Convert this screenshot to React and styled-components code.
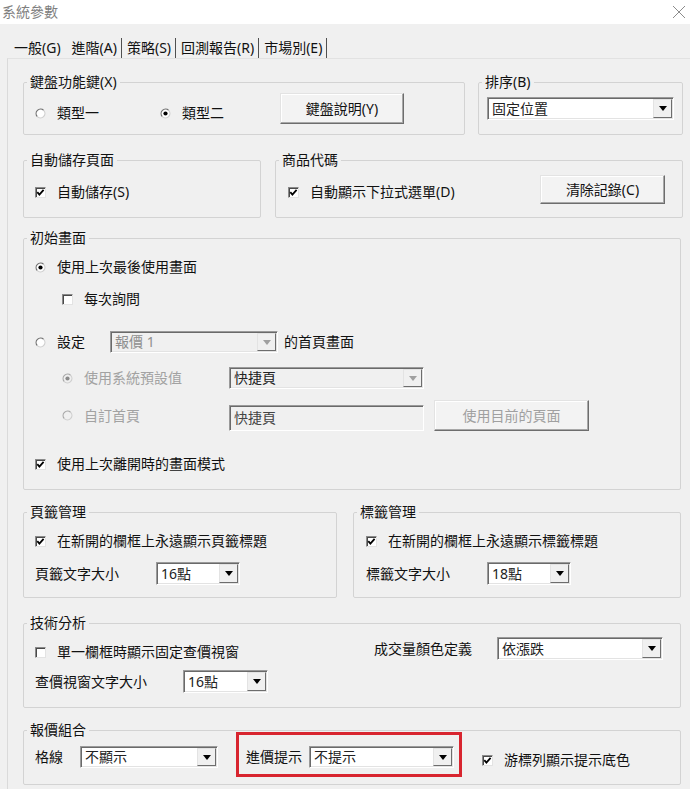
import React from 'react'
import styled, { createGlobalStyle } from 'styled-components'

const GlobalStyle = createGlobalStyle`
    html, body {
        margin: 0;
        padding: 0;
        background: #f0f0f0;
    }
    body {
        font-family: "Noto Sans", "Noto Sans CJK TC", sans-serif;
        font-size: 14px;
        line-height: 20px;
        color: #111;
    }
`

const tabs = ['一般(G)', '進階(A)', '策略(S)', '回測報告(R)', '市場別(E)']

const Radio = ({ checked, disabled }) => (
    <RadioSvg viewBox="0 0 11 11">
        <circle cx="5.5" cy="5.5" r="4.5" fill={disabled ? '#f0f0f0' : '#fff'} />
        <path d="M2.32 8.68A4.5 4.5 0 0 1 8.68 2.32" stroke={disabled ? '#a8a8a8' : '#707070'} strokeWidth="1.2" fill="none" />
        <path d="M8.68 2.32A4.5 4.5 0 0 1 2.32 8.68" stroke="#cfcfcf" strokeWidth="1.2" fill="none" />
        {checked && <circle cx="5.5" cy="5.5" r="2.1" fill={disabled ? '#8a8a8a' : '#000'} />}
    </RadioSvg>
)

const Option = ({ radio, checked, disabled, children, ...rest }) => (
    <OptionLabel $disabled={disabled} {...rest}>
        {radio ? (
            <Radio checked={checked} disabled={disabled} />
        ) : (
            <CheckBox>
                {checked && (
                    <svg width="9" height="9" viewBox="0 0 9 9">
                        <polyline points="1.3,4.2 3.4,6.6 7.6,1.9" fill="none" stroke="#000" strokeWidth="1.8" />
                    </svg>
                )}
            </CheckBox>
        )}
        <span>{children}</span>
    </OptionLabel>
)

const Select = ({ value, w, h = 23, disabled, muted }) => (
    <SelectFrame $w={w} $h={h} $disabled={disabled}>
        <SelectValue $muted={muted}>{value}</SelectValue>
        <Arrow $disabled={disabled} />
    </SelectFrame>
)

const App = () => {
    return (
        <Window>
            <GlobalStyle />
            <TitleBar>
                <Title>系統參數</Title>
                <svg width="14" height="14" viewBox="0 0 14 14">
                    <path d="M1 1L13 13M13 1L1 13" stroke="#8c8c8c" strokeWidth="1" />
                </svg>
            </TitleBar>
            <TabBar>
                {tabs.map((t, i) => (
                    <Tab key={t} $first={i === 0}>{t}</Tab>
                ))}
            </TabBar>
            <Panel>
                <Row $mt={13} $gap={13}>
                    <Group $w={442} $h={63}>
                        <Legend>鍵盤功能鍵(X)</Legend>
                        <Body $p="1px 0 0 11px">
                            <Option radio $mt={10}>類型一</Option>
                            <Option radio checked $mt={10} $ml={61}>類型二</Option>
                            <Button $w={124} $h={31} $ml={56}>鍵盤說明(Y)</Button>
                        </Body>
                    </Group>
                    <Group $w={205} $h={63}>
                        <Legend>排序(B)</Legend>
                        <Body $p="5px 0 0 8px">
                            <Select value="固定位置" w={187} />
                        </Body>
                    </Group>
                </Row>

                <Row $mt={15} $gap={14}>
                    <Group $w={238} $h={68}>
                        <Legend>自動儲存頁面</Legend>
                        <Body $p="0 0 0 11px">
                            <Option checked $mt={12}>自動儲存(S)</Option>
                        </Body>
                    </Group>
                    <Group $w={408} $h={68}>
                        <Legend>商品代碼</Legend>
                        <Body $p="0 17px 0 12px">
                            <Option checked $mt={12}>自動顯示下拉式選單(D)</Option>
                            <Button $w={125} $h={29} $mt={5} $push>清除記錄(C)</Button>
                        </Body>
                    </Group>
                </Row>

                <Row $mt={10}>
                    <Group $w={658} $h={262}>
                        <Legend>初始畫面</Legend>
                        <Body $p="0 0 0 11px" $col>
                            <Option radio checked $mt={9}>使用上次最後使用畫面</Option>
                            <Option $mt={12} $ml={27}>每次詢問</Option>
                            <Line $mt={22}>
                                <Cell $w={75}>
                                    <Option radio>設定</Option>
                                </Cell>
                                <Select value="報價 1" w={168} h={22} disabled muted />
                                <Text $ml={6}>的首頁畫面</Text>
                            </Line>
                            <Line $mt={14} $ml={27}>
                                <Cell $w={167}>
                                    <Option radio checked disabled>使用系統預設值</Option>
                                </Cell>
                                <Select value="快捷頁" w={195} h={22} disabled />
                            </Line>
                            <Line $mt={11} $ml={27}>
                                <Cell $w={167}>
                                    <Option radio disabled>自訂首頁</Option>
                                </Cell>
                                <Field>快捷頁</Field>
                                <Button $w={155} $h={31} $ml={10} disabled>使用目前的頁面</Button>
                            </Line>
                            <Option checked $mt={23}>使用上次離開時的畫面模式</Option>
                        </Body>
                    </Group>
                </Row>

                <Row $mt={12} $gap={16}>
                    <Group $w={314} $h={96}>
                        <Legend>頁籤管理</Legend>
                        <Body $p="0 0 0 11px" $col>
                            <Option checked $mt={9}>在新開的欄框上永遠顯示頁籤標題</Option>
                            <Line $mt={11}>
                                <Cell $w={121}>頁籤文字大小</Cell>
                                <Select value="16點" w={84} />
                            </Line>
                        </Body>
                    </Group>
                    <Group $w={328} $h={96}>
                        <Legend>標籤管理</Legend>
                        <Body $p="0 0 0 12px" $col>
                            <Option checked $mt={9}>在新開的欄框上永遠顯示標籤標題</Option>
                            <Line $mt={11}>
                                <Cell $w={121}>標籤文字大小</Cell>
                                <Select value="18點" w={84} />
                            </Line>
                        </Body>
                    </Group>
                </Row>

                <Row $mt={15}>
                    <Group $w={658} $h={95}>
                        <Legend>技術分析</Legend>
                        <Body $p="0 17px 0 11px">
                            <Column>
                                <Option $mt={9}>單一欄框時顯示固定查價視窗</Option>
                                <Line $mt={8}>
                                    <Cell $w={148}>查價視窗文字大小</Cell>
                                    <Select value="16點" w={85} />
                                </Line>
                            </Column>
                            <Line $mt={4} $push>
                                <Cell $w={123}>成交量顏色定義</Cell>
                                <Select value="依漲跌" w={166} />
                            </Line>
                        </Body>
                    </Group>
                </Row>

                <Row $mt={12}>
                    <Group $w={658} $h={65}>
                        <Legend>報價組合</Legend>
                        <Body $p="0 0 0 11px">
                            <Line $mt={6}>
                                <Cell $w={45}>格線</Cell>
                                <Select value="不顯示" w={138} h={22} />
                            </Line>
                            <Highlight>
                                <Cell $w={63}>進價提示</Cell>
                                <Select value="不提示" w={145} h={22} />
                            </Highlight>
                            <Option checked $mt={10} $ml={20}>游標列顯示提示底色</Option>
                        </Body>
                    </Group>
                </Row>
            </Panel>
        </Window>
    )
}

const Window = styled.div`
    width: 690px;
    height: 789px;
    overflow: hidden;
    background: #f0f0f0;
`
const TitleBar = styled.div`
    height: 24px;
    background: #fff;
    display: flex;
    align-items: center;
    justify-content: space-between;
    padding: 0 4px 0 2px;
    box-sizing: border-box;
`
const Title = styled.div`
    color: #7f7f7f;
    font-size: 14px;
`
const TabBar = styled.div`
    height: 34px;
    box-sizing: border-box;
    display: flex;
    align-items: flex-end;
    padding-left: 10px;
`
const Tab = styled.div`
    height: 20px;
    line-height: 20px;
    padding: 0 ${p => (p.$first ? '5px' : '4px')} 0 ${p => (p.$first ? '4px' : '5px')};
    border-right: 1px solid ${p => (p.$first ? 'transparent' : '#505050')};
    white-space: nowrap;
`
const Panel = styled.div`
    margin-left: 7px;
    height: 740px;
    border-top: 1px solid #e2e2e2;
    border-left: 1px solid #dadada;
    padding-left: 15px;
    display: flex;
    flex-direction: column;
`
const Row = styled.div`
    display: flex;
    gap: ${p => p.$gap || 0}px;
    margin-top: ${p => p.$mt || 0}px;
`
const Group = styled.fieldset`
    box-sizing: border-box;
    width: ${p => p.$w}px;
    height: ${p => p.$h}px;
    min-width: 0;
    margin: 0;
    padding: 0;
    border: 1px solid #d3d3d3;
    border-radius: 2px;
`
const Legend = styled.legend`
    margin-left: 3px;
    padding: 0 3px;
    line-height: 20px;
    font-size: 14px;
`
const Body = styled.div`
    display: flex;
    flex-direction: ${p => (p.$col ? 'column' : 'row')};
    align-items: flex-start;
    padding: ${p => p.$p};
`
const Column = styled.div`
    display: flex;
    flex-direction: column;
    align-items: flex-start;
`
const Line = styled.div`
    display: flex;
    align-items: center;
    margin-top: ${p => p.$mt || 0}px;
    margin-left: ${p => (p.$push ? 'auto' : `${p.$ml || 0}px`)};
`
const Cell = styled.div`
    width: ${p => p.$w}px;
    flex-shrink: 0;
    white-space: nowrap;
`
const Text = styled.span`
    margin-left: ${p => p.$ml || 0}px;
    white-space: nowrap;
`
const OptionLabel = styled.label`
    display: flex;
    align-items: center;
    gap: 11px;
    height: 20px;
    white-space: nowrap;
    color: ${p => (p.$disabled ? '#a2a2a2' : '#111')};
    margin-top: ${p => p.$mt || 0}px;
    margin-left: ${p => p.$ml || 0}px;
`
const RadioSvg = styled.svg`
    width: 11px;
    height: 11px;
    flex-shrink: 0;
`
const CheckBox = styled.span`
    box-sizing: border-box;
    width: 11px;
    height: 11px;
    flex-shrink: 0;
    display: inline-flex;
    align-items: center;
    justify-content: center;
    background: #fff;
    border: 1px solid;
    border-color: #8a8a8a #e3e3e3 #e3e3e3 #8a8a8a;
    box-shadow: inset 1px 1px 0 #4a4a4a;
`
const Button = styled.button`
    box-sizing: border-box;
    width: ${p => p.$w}px;
    height: ${p => p.$h}px;
    margin: ${p => p.$mt || 0}px 0 0 ${p => (p.$push ? 'auto' : `${p.$ml || 0}px`)};
    padding: 0;
    font: inherit;
    color: ${p => (p.disabled ? '#a0a0a0' : '#111')};
    background: #f3f3f3;
    border: 1px solid;
    border-color: #e3e3e3 #6d6d6d #6d6d6d #e3e3e3;
    box-shadow: inset -1px -1px 0 #a8a8a8, inset 1px 1px 0 #fff;
    flex-shrink: 0;
`
const SelectFrame = styled.div`
    box-sizing: border-box;
    width: ${p => p.$w}px;
    height: ${p => p.$h}px;
    flex-shrink: 0;
    display: flex;
    background: ${p => (p.$disabled ? '#f0f0f0' : '#fff')};
    border: 1px solid;
    border-color: #9a9a9a #fff #fff #9a9a9a;
    box-shadow: inset 1px 1px 0 #6a6a6a, inset -1px -1px 0 #e3e3e3;
    padding: 1px;
`
const SelectValue = styled.div`
    flex: 1;
    display: flex;
    align-items: center;
    padding-left: 3px;
    white-space: nowrap;
    color: ${p => (p.$muted ? '#8f8f8f' : '#222')};
`
const Arrow = styled.div`
    box-sizing: border-box;
    width: 19px;
    display: flex;
    align-items: center;
    justify-content: center;
    background: #f0f0f0;
    border: 1px solid;
    border-color: #e3e3e3 #6d6d6d #6d6d6d #e3e3e3;
    &::after {
        content: '';
        border-left: 4.5px solid transparent;
        border-right: 4.5px solid transparent;
        border-top: 5px solid ${p => (p.$disabled ? '#a0a0a0' : '#000')};
    }
`
const Field = styled.div`
    box-sizing: border-box;
    width: 195px;
    height: 26px;
    align-self: flex-end;
    display: flex;
    align-items: center;
    padding-left: 4px;
    color: #444;
    background: #f0f0f0;
    border: 1px solid;
    border-color: #9a9a9a #fff #fff #9a9a9a;
    box-shadow: inset 1px 1px 0 #6a6a6a;
`
const Highlight = styled.div`
    display: flex;
    align-items: center;
    margin: -8px 0 0 18px;
    padding: 11px 5px 6px 7px;
    border: 3px solid #d8252f;
`

export default App
